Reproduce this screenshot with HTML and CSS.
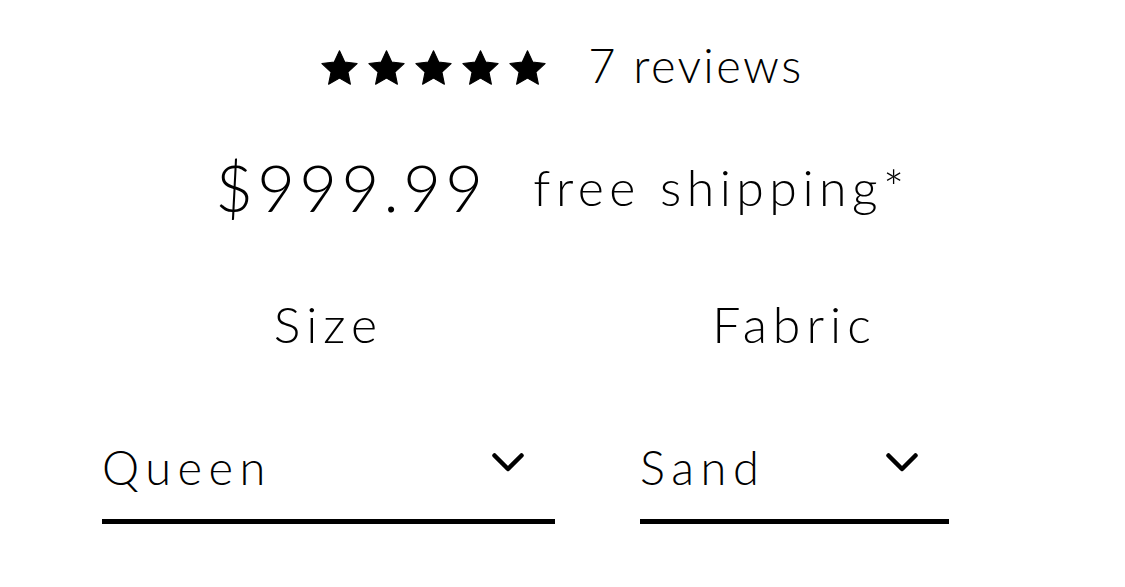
FILE: index.html
```html
<!DOCTYPE html>
<html lang="en">
<head>
<meta charset="utf-8">
<title>Product options</title>
<link rel="stylesheet" href="styles.css">
</head>
<body>
<main class="product">
  <div class="rating-row">
    <div class="stars" aria-label="5 out of 5 stars">
      <svg class="star" viewBox="0 -0.6 40 37.4"><path d="M20 0L25.64 12.23 39.02 13.82 29.12 22.96 31.76 36.18 20 29.6 8.24 36.18 10.88 22.96 0.98 13.82 14.36 12.23Z"/></svg>
      <svg class="star" viewBox="0 -0.6 40 37.4"><path d="M20 0L25.64 12.23 39.02 13.82 29.12 22.96 31.76 36.18 20 29.6 8.24 36.18 10.88 22.96 0.98 13.82 14.36 12.23Z"/></svg>
      <svg class="star" viewBox="0 -0.6 40 37.4"><path d="M20 0L25.64 12.23 39.02 13.82 29.12 22.96 31.76 36.18 20 29.6 8.24 36.18 10.88 22.96 0.98 13.82 14.36 12.23Z"/></svg>
      <svg class="star" viewBox="0 -0.6 40 37.4"><path d="M20 0L25.64 12.23 39.02 13.82 29.12 22.96 31.76 36.18 20 29.6 8.24 36.18 10.88 22.96 0.98 13.82 14.36 12.23Z"/></svg>
      <svg class="star" viewBox="0 -0.6 40 37.4"><path d="M20 0L25.64 12.23 39.02 13.82 29.12 22.96 31.76 36.18 20 29.6 8.24 36.18 10.88 22.96 0.98 13.82 14.36 12.23Z"/></svg>
    </div>
    <span class="reviews">7 reviews</span>
  </div>
  <div class="price-row">
    <span class="price">$999.99</span>
    <span class="shipping">free shipping*</span>
  </div>
  <div class="options">
    <div class="option option-size">
      <div class="option-label">Size</div>
      <div class="select">
        <span class="select-value">Queen</span>
        <svg class="chevron" viewBox="0 0 32 19"><polyline points="2.5,2.5 16,16 29.5,2.5"/></svg>
      </div>
    </div>
    <div class="option option-fabric">
      <div class="option-label">Fabric</div>
      <div class="select">
        <span class="select-value">Sand</span>
        <svg class="chevron" viewBox="0 0 32 19"><polyline points="2.5,2.5 16,16 29.5,2.5"/></svg>
      </div>
    </div>
  </div>
</main>
</body>
</html>
```
FILE: styles.css
```css
* { box-sizing: border-box; }

html, body {
  margin: 0;
  background: #fff;
}

body {
  font-family: Lato, "Open Sans", sans-serif;
  font-weight: 300;
  color: #000;
}

.product {
  padding-top: 42px;
}

.rating-row {
  display: flex;
  justify-content: center;
  align-items: center;
  gap: 42px;
}

.stars {
  display: flex;
  gap: 10px;
  margin-top: 4px;
}

.star {
  width: 37px;
  height: 37px;
  fill: #000;
  stroke: #000;
  stroke-width: 1.2;
  stroke-linejoin: round;
}

.reviews {
  font-size: 47px;
  line-height: 47px;
  letter-spacing: 2.4px;
}

.price-row {
  display: flex;
  justify-content: center;
  align-items: flex-start;
  gap: 46px;
  margin-top: 66px;
}

.price {
  font-size: 65px;
  line-height: 65px;
  letter-spacing: 4.4px;
}

.shipping {
  font-size: 50px;
  line-height: 50px;
  letter-spacing: 5.5px;
  margin-top: 7px;
}

.options {
  display: flex;
  gap: 85px;
  padding-left: 102px;
  margin-top: 79px;
}

.option-size { width: 453px; }
.option-fabric { width: 309px; }

.option-label {
  text-align: center;
  font-size: 50px;
  line-height: 50px;
  letter-spacing: 6px;
}

.select {
  display: flex;
  justify-content: space-between;
  align-items: flex-start;
  margin-top: 95px;
  padding-right: 31px;
  padding-bottom: 28px;
  border-bottom: 5px solid #000;
}

.select-value {
  font-size: 47px;
  line-height: 47px;
  letter-spacing: 6.5px;
}

.chevron {
  width: 32px;
  height: 19px;
  margin-top: 9px;
  fill: none;
  stroke: #000;
  stroke-width: 4.5;
  stroke-linecap: round;
  stroke-linejoin: round;
}
```
